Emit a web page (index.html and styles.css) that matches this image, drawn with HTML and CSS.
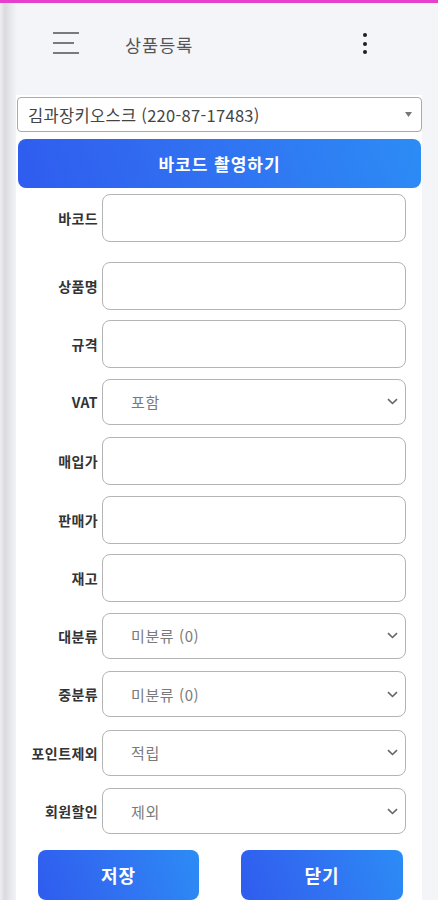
FILE: index.html
```html
<!DOCTYPE html>
<html lang="ko">
<head>
<meta charset="utf-8">
<title>상품등록</title>
<link rel="stylesheet" href="styles.css">
</head>
<body>
<div class="topbar"></div>
<header class="header">
  <div class="hamburger"><span></span><span class="short"></span><span></span></div>
  <div class="title">상품등록</div>
  <div class="kebab"><span></span><span></span><span></span></div>
</header>
<main class="panel">
  <div class="store-select">
    <span>김과장키오스크 (220-87-17483)</span>
    <svg class="tri" width="7" height="5" viewBox="0 0 7 5"><path d="M0 0H7L3.5 5Z" fill="#777"/></svg>
  </div>
  <button class="btn btn-scan">바코드 촬영하기</button>
  <div class="form">
    <div class="row first"><label class="lbl">바코드</label><div class="inp"></div></div>
    <div class="row"><label class="lbl">상품명</label><div class="inp"></div></div>
    <div class="row"><label class="lbl">규격</label><div class="inp"></div></div>
    <div class="row"><label class="lbl">VAT</label><div class="inp sel"><span>포함</span><svg class="chev" width="11" height="7" viewBox="0 0 11 7"><path d="M1 1.2L5.5 5.5L10 1.2" fill="none" stroke="#666" stroke-width="1.6"/></svg></div></div>
    <div class="row"><label class="lbl">매입가</label><div class="inp"></div></div>
    <div class="row"><label class="lbl">판매가</label><div class="inp"></div></div>
    <div class="row"><label class="lbl">재고</label><div class="inp"></div></div>
    <div class="row"><label class="lbl">대분류</label><div class="inp sel"><span>미분류 (0)</span><svg class="chev" width="11" height="7" viewBox="0 0 11 7"><path d="M1 1.2L5.5 5.5L10 1.2" fill="none" stroke="#666" stroke-width="1.6"/></svg></div></div>
    <div class="row"><label class="lbl">중분류</label><div class="inp sel"><span>미분류 (0)</span><svg class="chev" width="11" height="7" viewBox="0 0 11 7"><path d="M1 1.2L5.5 5.5L10 1.2" fill="none" stroke="#666" stroke-width="1.6"/></svg></div></div>
    <div class="row"><label class="lbl">포인트제외</label><div class="inp sel"><span>적립</span><svg class="chev" width="11" height="7" viewBox="0 0 11 7"><path d="M1 1.2L5.5 5.5L10 1.2" fill="none" stroke="#666" stroke-width="1.6"/></svg></div></div>
    <div class="row"><label class="lbl">회원할인</label><div class="inp sel"><span>제외</span><svg class="chev" width="11" height="7" viewBox="0 0 11 7"><path d="M1 1.2L5.5 5.5L10 1.2" fill="none" stroke="#666" stroke-width="1.6"/></svg></div></div>
  </div>
  <div class="actions">
    <button class="btn btn-act">저장</button>
    <button class="btn btn-act">닫기</button>
  </div>
</main>
</body>
</html>
```
FILE: styles.css
```css
* { box-sizing: border-box; }
html, body { height: 100%; }
body {
  margin: 0;
  font-family: "Noto Sans CJK KR", "Noto Sans", sans-serif;
  background-color: #f4f5f9;
  background-image: linear-gradient(to right, #eeeef1 0, #dadadf 5px, #e6e7ea 10px, #f4f5f9 17px);
  background-size: 17px 100%;
  background-repeat: no-repeat;
  overflow: hidden;
}
.topbar { height: 3px; background: #e53fcb; }
.header {
  height: 92px;
  display: flex;
  align-items: flex-start;
  padding-top: 27px;
}
.hamburger {
  margin-left: 53px;
  width: 27px;
  height: 24px;
  display: flex;
  flex-direction: column;
  justify-content: space-between;
  padding-top: 2px;
}
.hamburger span { display: block; height: 1.6px; width: 26px; background: #7a7a7a; }
.hamburger span.short { width: 21px; }
.title {
  margin-left: 45px;
  margin-top: -1px;
  font-size: 17.5px;
  color: #555;
  line-height: 32px;
  letter-spacing: 1px;
}
.kebab {
  margin-left: auto;
  margin-right: 71px;
  display: flex;
  flex-direction: column;
  gap: 4.5px;
  padding-top: 3px;
}
.kebab span { width: 4px; height: 4px; border-radius: 50%; background: #1e1e1e; }
.panel {
  margin-left: 16px;
  width: 406px;
  background: #fff;
  min-height: 810px;
  padding: 2px 0 0 1px;
}
.store-select {
  width: 405px;
  height: 35px;
  border: 1px solid #aaa;
  border-radius: 4px;
  display: flex;
  align-items: center;
  padding: 0 9px 0 10px;
  font-size: 16.5px;
  letter-spacing: 0.3px;
  color: #444;
}
.store-select span { flex: 1; }
.btn {
  border: 0;
  color: #fff;
  font-family: inherit;
  font-weight: 700;
  background: linear-gradient(70deg, #2f5cef 0%, #3170f1 45%, #2c8cf5 100%);
  cursor: pointer;
}
.btn-scan {
  display: block;
  margin: 7px 0 0 1px;
  width: 403px;
  height: 49px;
  border-radius: 8px;
  font-size: 17px;
  letter-spacing: 1px;
}
.form {
  display: flex;
  flex-direction: column;
  gap: 10.5px;
  margin-top: 6px;
  padding-right: 16px;
}
.row {
  display: flex;
  align-items: flex-start;
  height: 48px;
}
.row.first { margin-bottom: 9px; }
.lbl {
  width: 81px;
  text-align: right;
  font-size: 14px;
  font-weight: 700;
  color: #333;
  line-height: 48px;
  letter-spacing: 0.4px;
  white-space: nowrap;
}
.inp {
  margin-left: 4px;
  flex: 1;
  height: 48px;
  border: 1.5px solid #b4b4b4;
  border-radius: 8px;
  background: #fff;
}
.inp.sel {
  height: 46px;
  display: flex;
  align-items: center;
  padding: 0 7px 0 28px;
  font-size: 15px;
  letter-spacing: 0.6px;
  color: #7a7a7a;
}
.row:has(.sel) .lbl { line-height: 46px; }
.inp.sel span { flex: 1; }
.actions {
  display: flex;
  justify-content: space-between;
  padding: 0 19px 0 21px;
  margin-top: 14px;
}
.btn-act {
  width: 161px;
  height: 50px;
  border-radius: 8px;
  font-size: 18px;
  letter-spacing: 1px;
}
.btn-act + .btn-act { width: 162px; }
```
